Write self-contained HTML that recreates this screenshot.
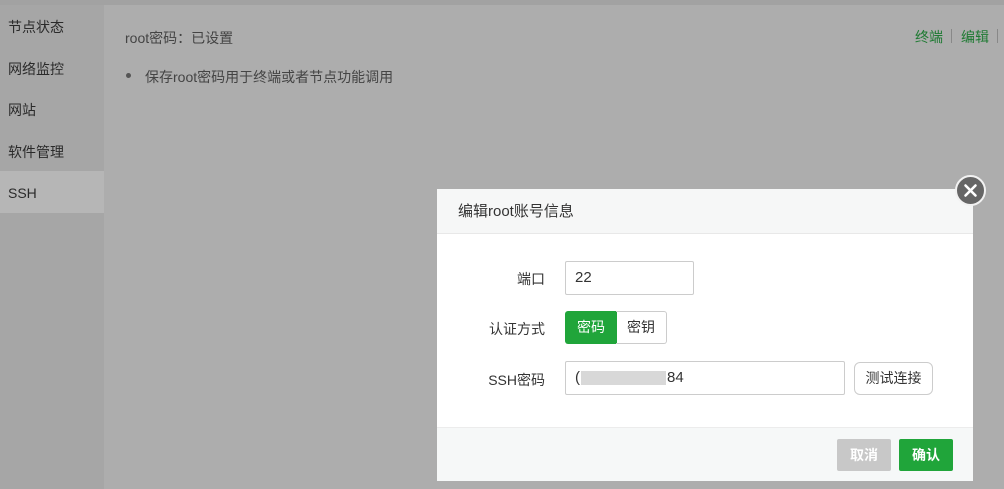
<!DOCTYPE html>
<html><head><meta charset="utf-8"><style>
*{margin:0;padding:0;box-sizing:border-box}
body{width:1004px;height:489px;overflow:hidden;background:#adadad;font-family:"Liberation Sans","Noto Sans CJK SC",sans-serif;font-size:14px;color:#333;position:relative}
.top{position:absolute;left:0;top:0;width:1004px;height:5px;background:#a2a2a2}
.side{position:absolute;left:0;top:5px;width:104px;height:484px;background:#a6a6a6}
.side div{height:41.6px;line-height:45px;padding-left:8px;color:#2a2a2a;font-size:14px}
.side .act{background:#b6b6b6}
.t1{position:absolute;left:125px;top:28px;color:#444}
.t2{position:absolute;left:145px;top:67px;color:#444}
.dot{position:absolute;left:126px;top:73px;width:5px;height:5px;border-radius:50%;background:#555}
.lk{position:absolute;top:27px;color:#1e7a32;font-size:14px}
.sep{position:absolute;top:29px;width:1px;height:14px;background:#888}
.modal{position:absolute;left:437px;top:189px;width:536px;height:292px;background:#fff}
.hd{height:45px;background:#f6f7f7;border-bottom:1px solid #e8e8e8;padding-left:21px;line-height:46px;font-size:15px;color:#333}
.ft{position:absolute;left:0;top:238px;width:536px;height:54px;background:#f6f8f8;border-top:1px solid #ececec}
.lbl{position:absolute;width:108px;text-align:right;font-size:14px;color:#333}
.inp{position:absolute;border:1px solid #ccc;border-radius:2px;background:#fff;font-size:15px;padding-left:9px;line-height:32px;color:#333}
.close{position:absolute;left:955px;top:175px;width:31px;height:31px;border-radius:50%;background:#666;border:2px solid #f2f2f2}
</style></head><body>
<div class="top"></div>
<div class="side"><div>节点状态</div><div>网络监控</div><div>网站</div><div>软件管理</div><div class="act">SSH</div></div>
<div class="t1">root密码：已设置</div>
<div class="dot"></div><div class="t2">保存root密码用于终端或者节点功能调用</div>
<div class="lk" style="left:915px">终端</div><div class="sep" style="left:951px"></div>
<div class="lk" style="left:961px">编辑</div><div class="sep" style="left:997px"></div>
<div class="modal">
<div class="hd">编辑root账号信息</div>
<div class="lbl" style="left:0;top:80px">端口</div>
<div class="inp" style="left:128px;top:72px;width:129px;height:34px">22</div>
<div class="lbl" style="left:0;top:130px">认证方式</div>
<div style="position:absolute;left:128px;top:122px;width:52px;height:33px;background:#20a53a;color:#fff;border-radius:3px 0 0 3px;text-align:center;line-height:33px">密码</div>
<div style="position:absolute;left:179px;top:122px;width:51px;height:33px;border:1px solid #ccc;border-left:none;border-radius:0 3px 3px 0;text-align:center;line-height:31px">密钥</div>
<div class="lbl" style="left:0;top:181px">SSH密码</div>
<div class="inp" style="left:128px;top:172px;width:280px;height:34px">(<span style="display:inline-block;width:85px;height:14px;background:#d8d8d8;vertical-align:middle;margin:0 1px"></span>84</div>
<div style="position:absolute;left:417px;top:173px;width:79px;height:33px;border:1px solid #ccc;border-radius:6px;text-align:center;line-height:31px">测试连接</div>
<div class="ft">
<div style="position:absolute;left:400px;top:11px;width:54px;height:32px;background:#c8c8c8;color:#fff;text-align:center;line-height:32px;font-weight:bold;border-radius:2px">取消</div>
<div style="position:absolute;left:462px;top:11px;width:54px;height:32px;background:#20a53a;color:#fff;text-align:center;line-height:32px;font-weight:bold;border-radius:2px">确认</div>
</div>
</div>
<div class="close"><svg width="27" height="27" viewBox="0 0 27 27" style="position:absolute;left:0;top:0"><path d="M8.5 8.5L18.5 18.5M18.5 8.5L8.5 18.5" stroke="#fff" stroke-width="2.6" stroke-linecap="round"/></svg></div>
</body></html>
